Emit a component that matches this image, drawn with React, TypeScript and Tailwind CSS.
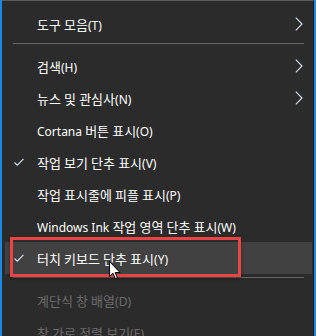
import React from "react";

type Item =
  | { kind: "sep" }
  | { kind: "item"; label: string; check?: boolean; sub?: boolean; disabled?: boolean; hover?: boolean };

const items: Item[] = [
  { kind: "item", label: "도구 모음(T)", sub: true },
  { kind: "sep" },
  { kind: "item", label: "검색(H)", sub: true },
  { kind: "item", label: "뉴스 및 관심사(N)", sub: true },
  { kind: "item", label: "Cortana 버튼 표시(O)" },
  { kind: "item", label: "작업 보기 단추 표시(V)", check: true },
  { kind: "item", label: "작업 표시줄에 피플 표시(P)" },
  { kind: "item", label: "Windows Ink 작업 영역 단추 표시(W)" },
  { kind: "item", label: "터치 키보드 단추 표시(Y)", check: true, hover: true },
  { kind: "sep" },
  { kind: "item", label: "계단식 창 배열(D)", disabled: true },
  { kind: "item", label: "창 가로 정렬 보기(E)", disabled: true },
];

function Label({ text }: { text: string }) {
  const parts = text.match(/[\uAC00-\uD7A3]+|[^\uAC00-\uD7A3]+/g) || [];
  return (
    <>
      {parts.map((p, i) =>
        /[\uAC00-\uD7A3]/.test(p) ? (
          <span key={i} className="text-[13px]" style={{ fontFamily: '"Noto Sans CJK KR", sans-serif' }}>
            {p}
          </span>
        ) : (
          <span key={i} className="text-[12px]" style={{ fontFamily: '"Noto Sans", "Noto Sans CJK KR", sans-serif' }}>
            {p}
          </span>
        )
      )}
    </>
  );
}

function Check() {
  return (
    <svg width="10" height="8" viewBox="0 0 10 8" className="block">
      <path d="M0.5 4.5 L3.3 7.2 L9.5 0.8" fill="none" stroke="#d6e2f0" strokeWidth="1.1" />
    </svg>
  );
}

function Chevron() {
  return (
    <svg width="8" height="14" viewBox="0 0 8 14" className="block">
      <path d="M0.8 0.7 L7 7 L0.8 13.3" fill="none" stroke="#dbe4ee" strokeWidth="1.1" />
    </svg>
  );
}

export default function App() {
  return (
    <div
      className="relative w-[316px] h-[336px] overflow-hidden bg-[#1b8ae0]"
      style={{ fontFamily: '"Noto Sans", "Noto Sans CJK KR", sans-serif' }}
    >
      <div className="ml-[2px] w-[312px] h-[336px] bg-[#2b2b2b] border-t border-[#5c5c5c] border-r border-r-[#1c1c1c] pt-[7px]">
        {items.map((it, i) =>
          it.kind === "sep" ? (
            <div key={i} className="h-[10px] pt-[3px] pl-[11px]">
              <div className="w-[291px] h-px bg-[#656565]" />
            </div>
          ) : (
            <div
              key={i}
              className={`h-[32px] ml-[3px] mr-[1px] flex items-center ${
                it.hover ? "bg-[#414141]" : ""
              }`}
            >
              <div className="w-[32px] pl-[9px] flex items-center">{it.check ? <Check /> : null}</div>
              <div
                className={`flex-1 leading-[32px] h-[32px] whitespace-nowrap ${
                  it.disabled ? "text-[#6b6b6b]" : "text-white"
                }`}
              >
                <Label text={it.label} />
              </div>
              <div className="w-[17px] flex items-center">{it.sub ? <Chevron /> : null}</div>
            </div>
          )
        )}
      </div>
      <div className="absolute left-[10px] top-[237px] w-[231px] h-[40px] border-[3px] border-[#ec4444] shadow-[0_2px_3px_rgba(0,0,0,0.35)]" />
      <svg className="absolute left-[109px] top-[261px]" width="12" height="19" viewBox="0 0 12 19">
        <path
          d="M0.5 0.5 L0.5 15.5 L4 12.2 L6.3 17.6 L8.4 16.7 L6.2 11.5 L11 11.5 Z"
          fill="#ffffff"
          stroke="#000000"
          strokeWidth="1"
          strokeLinejoin="miter"
        />
      </svg>
    </div>
  );
}
